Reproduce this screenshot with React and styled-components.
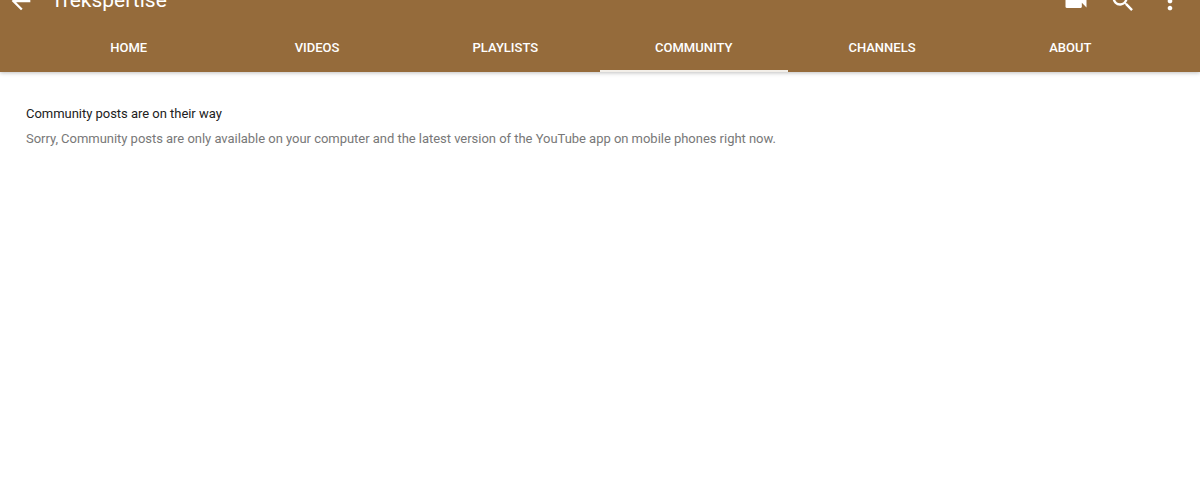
import React from 'react';
import styled, { createGlobalStyle } from 'styled-components';

const GlobalStyle = createGlobalStyle`
  html, body {
    margin: 0;
    background: #fff;
    font-family: Roboto, "Liberation Sans", sans-serif;
  }
`;

const Page = styled.div`
  width: 1200px;
  height: 485px;
  overflow: hidden;
  background: #fff;
`;

const Header = styled.header`
  height: 72px;
  display: flex;
  flex-direction: column;
  justify-content: flex-end;
  overflow: hidden;
  background: #956b3b;
  color: #fff;
  box-shadow: 0 1px 4px rgba(0, 0, 0, 0.25);
  position: relative;
`;

const TopBar = styled.div`
  flex: none;
  height: 47px;
  display: flex;
  align-items: center;
  padding: 0 7px;
`;

const Title = styled.h1`
  flex: 1;
  margin: 0 0 2px 16px;
  font-size: 21px;
  font-weight: 400;
  line-height: 26px;
`;

const IconButton = styled.button`
  flex: none;
  width: ${(p) => p.$width || 47}px;
  height: 28px;
  padding: 0;
  border: 0;
  background: none;
  color: #fff;
  display: flex;
  align-items: center;
  justify-content: center;
`;

const Tabs = styled.nav`
  flex: none;
  height: 48px;
  display: grid;
  grid-template-columns: repeat(6, 1fr);
  padding: 0 35px;
`;

const Tab = styled.div`
  display: flex;
  align-items: center;
  justify-content: center;
  padding-right: 1px;
  font-size: 13px;
  font-weight: 500;
  color: #fff;
  box-sizing: border-box;
  border-bottom: 2px solid ${(p) => (p.$active ? '#f3efe9' : 'transparent')};
`;

const Notice = styled.section`
  padding: 33px 26px 0;
`;

const NoticeTitle = styled.h2`
  margin: 0 0 7px;
  font-size: 13px;
  font-weight: 400;
  line-height: 18px;
  letter-spacing: -0.03px;
  color: #212121;
`;

const NoticeText = styled.p`
  margin: 0;
  font-size: 13px;
  line-height: 18px;
  letter-spacing: -0.03px;
  color: #787878;
`;

const tabs = ['HOME', 'VIDEOS', 'PLAYLISTS', 'COMMUNITY', 'CHANNELS', 'ABOUT'];

const Icon = ({ d }) => (
  <svg width="28" height="28" viewBox="0 0 24 24" fill="currentColor">
    <path d={d} />
  </svg>
);

const BACK = 'M20 11H7.83l5.59-5.59L12 4l-8 8 8 8 1.41-1.41L7.83 13H20v-2z';
const CAMERA = 'M17 10.5V7c0-.55-.45-1-1-1H4c-.55 0-1 .45-1 1v10c0 .55.45 1 1 1h12c.55 0 1-.45 1-1v-3.5l4 4v-11l-4 4z';
const SEARCH = 'M15.5 14h-.79l-.28-.27A6.47 6.47 0 0 0 16 9.5 6.5 6.5 0 1 0 9.5 16c1.61 0 3.09-.59 4.23-1.57l.27.28v.79l5 4.99L20.49 19l-4.99-5zm-6 0C7.01 14 5 11.99 5 9.5S7.01 5 9.5 5 14 7.01 14 9.5 11.99 14 9.5 14z';
const MORE = 'M12 8c1.1 0 2-.9 2-2s-.9-2-2-2-2 .9-2 2 .9 2 2 2zm0 2c-1.1 0-2 .9-2 2s.9 2 2 2 2-.9 2-2-.9-2-2-2zm0 6c-1.1 0-2 .9-2 2s.9 2 2 2 2-.9 2-2-.9-2-2-2z';

const App = () => (
  <Page>
    <GlobalStyle />
    <Header>
      <TopBar>
        <IconButton $width={28}><Icon d={BACK} /></IconButton>
        <Title>Trekspertise</Title>
        <IconButton><Icon d={CAMERA} /></IconButton>
        <IconButton><Icon d={SEARCH} /></IconButton>
        <IconButton><Icon d={MORE} /></IconButton>
      </TopBar>
      <Tabs>
        {tabs.map((name) => (
          <Tab key={name} $active={name === 'COMMUNITY'}>{name}</Tab>
        ))}
      </Tabs>
    </Header>
    <Notice>
      <NoticeTitle>Community posts are on their way</NoticeTitle>
      <NoticeText>
        Sorry, Community posts are only available on your computer and the latest version of the YouTube app on mobile phones right now.
      </NoticeText>
    </Notice>
  </Page>
);

export default App;
